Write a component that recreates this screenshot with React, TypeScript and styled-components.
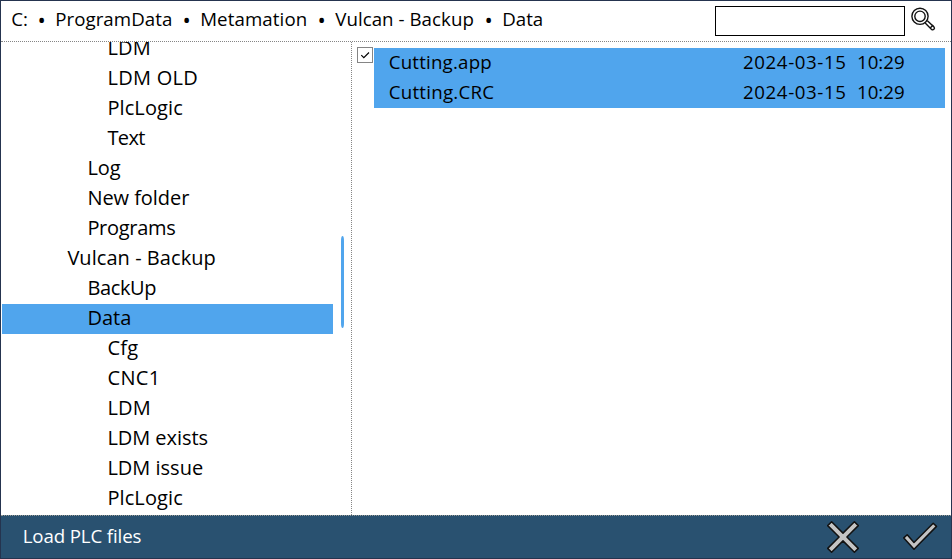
import React, { Fragment } from "react";
import styled, { createGlobalStyle } from "styled-components";

const GlobalStyle = createGlobalStyle`
  * { box-sizing: border-box; }
  body { margin: 0; background: #fff; }
`;

const accent = "#50a5ed";
const dots = "1px dotted #858585";

const Window = styled.div`
  display: flex;
  flex-direction: column;
  width: 952px;
  height: 559px;
  overflow: hidden;
  border: 1px solid #25344f;
  background: #fff;
  color: #000;
  font-family: "Open Sans", "Noto Sans", sans-serif;
  font-size: 18.7px;
  white-space: pre;
`;

const Header = styled.header`
  display: flex;
  flex: none;
  height: 41px;
  border-bottom: ${dots};
`;

const Breadcrumb = styled.nav`
  display: flex;
  flex: 1;
  padding-left: 10.2px;
  line-height: 36px;
`;

const Crumb = styled.span<{ $width: number; $spacing?: number }>`
  width: ${(p) => p.$width}px;
  letter-spacing: ${(p) => p.$spacing ?? 0}px;
`;

const Bullet = styled.span`
  display: flex;
  justify-content: center;
  width: 27px;
  font-size: 22px;
`;

const SearchInput = styled.input`
  width: 190px;
  height: 30px;
  margin: 5px 6px 0 0;
  padding: 0 6px;
  border: 1px solid #000;
  border-radius: 0;
  outline: none;
  background: #fff;
  font: inherit;
`;

const SearchIcon = styled.svg`
  width: 26px;
  height: 26px;
  margin: 5px 14px 0 0;
`;

const Body = styled.main`
  display: flex;
  flex: 1;
  min-height: 0;
`;

const TreePane = styled.aside`
  display: flex;
  width: 351px;
  padding-left: 1px;
  border-right: ${dots};
  overflow: hidden;
`;

const TreeList = styled.div`
  width: 331px;
  margin-top: -8px;
  font-size: 20px;
`;

const TreeRow = styled.div<{ $level: number; $selected?: boolean; $spacing?: number }>`
  height: 30px;
  padding-left: ${(p) => 45.4 + p.$level * 20}px;
  line-height: 28px;
  letter-spacing: ${(p) => p.$spacing ?? 0}px;
  background: ${(p) => (p.$selected ? accent : "transparent")};
`;

const ScrollThumb = styled.div`
  width: 3px;
  height: 92px;
  margin: 194px 0 0 8px;
  border-radius: 1.5px / 5px;
  background: ${accent};
`;

const FilePane = styled.section`
  display: flex;
  flex: 1;
  align-items: flex-start;
  padding: 5px 6px 0 5px;
`;

const CheckBox = styled.div`
  display: flex;
  width: 16px;
  height: 16px;
  margin-right: 1px;
  border: 1px solid #858585;
`;

const FileList = styled.div`
  flex: 1;
  margin-top: 1px;
`;

const FileRow = styled.div`
  display: flex;
  height: 30px;
  padding-left: 14.7px;
  line-height: 27px;
  background: ${accent};
`;

const FileName = styled.span<{ $spacing: number }>`
  flex: 1;
  letter-spacing: ${(p) => p.$spacing}px;
`;

const FileDate = styled.span`
  width: 114px;
  letter-spacing: 0.6px;
`;

const FileTime = styled.span`
  width: 88px;
`;

const Footer = styled.footer`
  display: flex;
  flex: none;
  height: 43px;
  border-top: 1px dotted #9a9a92;
  background: #295170;
  color: #fff;
`;

const Status = styled.span`
  flex: 1;
  padding-left: 21.7px;
  line-height: 40px;
  letter-spacing: -0.13px;
`;

const ActionIcon = styled.svg<{ $right: number }>`
  width: 38px;
  height: 38px;
  margin: 2px ${(p) => p.$right}px 0 0;
`;

const crumbs = [
  { label: "C:", width: 17 },
  { label: "ProgramData", width: 118, spacing: 0.05 },
  { label: "Metamation", width: 108, spacing: 0.1 },
  { label: "Vulcan - Backup", width: 140, spacing: 0.05 },
  { label: "Data", width: 60 },
];

const tree = [
  { label: "LDM", level: 3, spacing: 0.2 },
  { label: "LDM OLD", level: 3, spacing: 0.3 },
  { label: "PlcLogic", level: 3, spacing: 0.1 },
  { label: "Text", level: 3, spacing: -0.6 },
  { label: "Log", level: 2 },
  { label: "New folder", level: 2, spacing: -0.05 },
  { label: "Programs", level: 2, spacing: -0.3 },
  { label: "Vulcan - Backup", level: 1, spacing: 0.05 },
  { label: "BackUp", level: 2, spacing: -0.35 },
  { label: "Data", level: 2, selected: true },
  { label: "Cfg", level: 3, spacing: 0.3 },
  { label: "CNC1", level: 3, spacing: 0.4 },
  { label: "LDM", level: 3, spacing: 0.2 },
  { label: "LDM exists", level: 3, spacing: -0.05 },
  { label: "LDM issue", level: 3 },
  { label: "PlcLogic", level: 3, spacing: 0.1 },
];

const files = [
  { name: "Cutting.app", spacing: 0.2, date: "2024-03-15", time: "10:29" },
  { name: "Cutting.CRC", spacing: 0.25, date: "2024-03-15", time: "10:29" },
];

function Magnifier() {
  return (
    <SearchIcon viewBox="0 0 26 26" fill="none" stroke="#111" strokeWidth="1.4">
      <circle cx="9" cy="10.3" r="8.1" />
      <circle cx="9" cy="10.3" r="5.2" />
      <path d="M14.2 17l6.4 6.4q1.2 1 2.3-.1t.1-2.3L16.4 14.8" />
      <path d="M19.2 22l3-3" />
    </SearchIcon>
  );
}

function CancelIcon() {
  return (
    <ActionIcon $right={38} viewBox="824 518 38 38" fill="none" strokeLinejoin="round">
      <path
        d="M831.6 521.7L843 533.1l11.4-11.4 3.9 3.9L846.9 537l11.4 11.4-3.9 3.9L843 540.9l-11.4 11.4-3.9-3.9L839.1 537l-11.4-11.4z"
        fill="#c4c4c4"
        stroke="#111"
        strokeWidth="1.5"
      />
    </ActionIcon>
  );
}

function AcceptIcon() {
  return (
    <ActionIcon $right={13} viewBox="900 518 38 38" fill="none" strokeLinejoin="round">
      <path
        d="M907.2 534.7l6.8 7.8 19.2-19.2 3.3 3.1L914 549.3l-10.2-11.4z"
        fill="#c4c4c4"
        stroke="#111"
        strokeWidth="1.5"
      />
    </ActionIcon>
  );
}

export default function App() {
  return (
    <Window>
      <GlobalStyle />
      <Header>
        <Breadcrumb>
          {crumbs.map((c, i) => (
            <Fragment key={c.label}>
              {i > 0 && <Bullet>•</Bullet>}
              <Crumb $width={c.width} $spacing={c.spacing}>{c.label}</Crumb>
            </Fragment>
          ))}
        </Breadcrumb>
        <SearchInput aria-label="Search" />
        <Magnifier />
      </Header>
      <Body>
        <TreePane>
          <TreeList>
            {tree.map((n, i) => (
              <TreeRow key={i} $level={n.level} $selected={n.selected} $spacing={n.spacing}>
                {n.label}
              </TreeRow>
            ))}
          </TreeList>
          <ScrollThumb />
        </TreePane>
        <FilePane>
          <CheckBox>
            <svg width="14" height="14" viewBox="0 0 14 14" fill="none" stroke="#000" strokeWidth="1.15">
              <path d="M3.3 7.2l2.5 2.5 5.2-5.2" />
            </svg>
          </CheckBox>
          <FileList>
            {files.map((f) => (
              <FileRow key={f.name}>
                <FileName $spacing={f.spacing}>{f.name}</FileName>
                <FileDate>{f.date}</FileDate>
                <FileTime>{f.time}</FileTime>
              </FileRow>
            ))}
          </FileList>
        </FilePane>
      </Body>
      <Footer>
        <Status>Load PLC files</Status>
        <CancelIcon />
        <AcceptIcon />
      </Footer>
    </Window>
  );
}
